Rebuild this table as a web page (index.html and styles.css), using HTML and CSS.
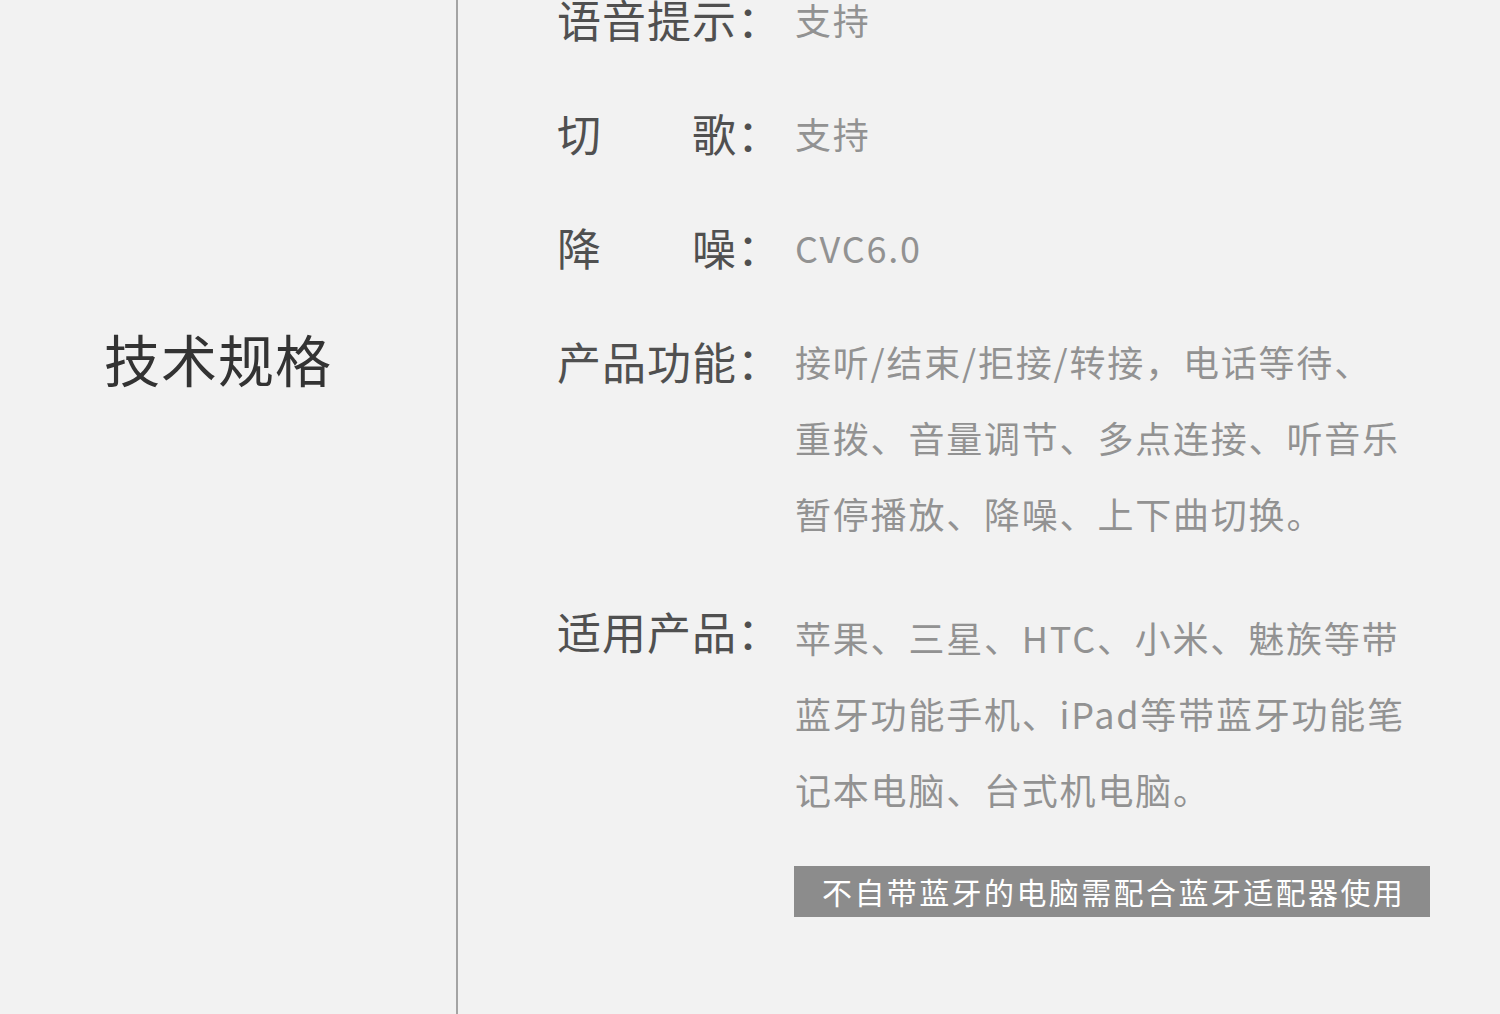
FILE: index.html
```html
<!DOCTYPE html>
<html lang="zh-CN">
<head>
    <meta charset="UTF-8">
    <meta name="viewport" content="width=device-width, initial-scale=1.0">
    <title>技术规格</title>
    <link rel="stylesheet" href="styles.css">
</head>
<body>
    <div class="page">
        <div class="side">
            <h2 class="side-title">技术规格</h2>
        </div>
        <div class="specs">
            <div class="spec-row">
                <div class="spec-label">语音提示：</div>
                <div class="spec-value">支持</div>
            </div>
            <div class="spec-row">
                <div class="spec-label">切　　歌：</div>
                <div class="spec-value">支持</div>
            </div>
            <div class="spec-row">
                <div class="spec-label">降　　噪：</div>
                <div class="spec-value">CVC6.0</div>
            </div>
            <div class="spec-row spec-row-long">
                <div class="spec-label">产品功能：</div>
                <div class="spec-value">接听/结束/拒接/转接，电话等待、<br>重拨、音量调节、多点连接、听音乐<br>暂停播放、降噪、上下曲切换。</div>
            </div>
            <div class="spec-row">
                <div class="spec-label spec-label-up">适用产品：</div>
                <div class="spec-value">苹果、三星、HTC、小米、魅族等带<br>蓝牙功能手机、iPad等带蓝牙功能笔<br>记本电脑、台式机电脑。</div>
            </div>
            <div class="note">不自带蓝牙的电脑需配合蓝牙适配器使用</div>
        </div>
    </div>
</body>
</html>
```

FILE: styles.css
```css
body {
    margin: 0;
    background-color: #f2f2f2;
    font-family: "Noto Sans CJK SC", "Noto Sans", sans-serif;
    overflow: hidden;
}
.page {
    display: flex;
    height: 100vh;
}
.side {
    width: 456px;
    flex-shrink: 0;
    border-right: 2px solid #a4a4a4;
}
.side-title {
    margin: 0;
    padding: 330px 0 0 104px;
    font-size: 56px;
    font-weight: normal;
    line-height: 56px;
    letter-spacing: 1px;
    color: #333;
}
.specs {
    padding-left: 99px;
    margin-top: -19px;
}
.spec-row {
    display: flex;
    margin-bottom: 38px;
}
.spec-row-long {
    margin-bottom: 48px;
}
.spec-label {
    width: 238px;
    flex-shrink: 0;
    font-size: 44px;
    line-height: 76px;
    letter-spacing: 1px;
    color: #505050;
    white-space: nowrap;
}
.spec-label-up {
    line-height: 64px;
}
.spec-value {
    font-size: 36px;
    line-height: 76px;
    letter-spacing: 1.8px;
    color: #929292;
    white-space: nowrap;
}
.note {
    display: inline-block;
    margin-left: 237px;
    margin-top: 1px;
    padding: 0 25px 0 28px;
    height: 51px;
    line-height: 51px;
    font-size: 30px;
    letter-spacing: 2.4px;
    color: #fff;
    background-color: #8c8c8c;
    white-space: nowrap;
}
```
